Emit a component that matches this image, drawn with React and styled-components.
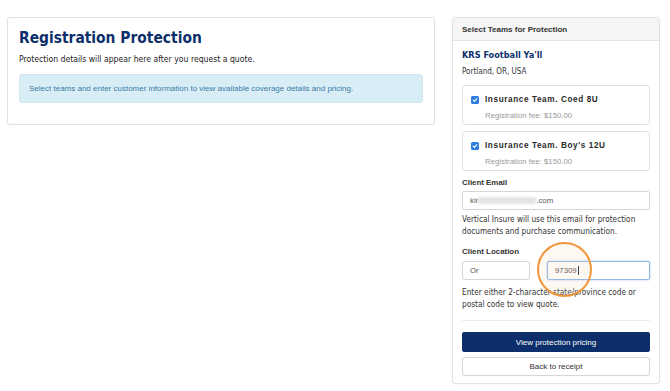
import React from 'react'
import styled, { createGlobalStyle } from 'styled-components'

const GlobalStyle = createGlobalStyle`
  body {
    margin: 0;
    background: #fff;
    font-family: "DejaVu Sans Condensed", "DejaVu Sans", Verdana, sans-serif;
    font-stretch: condensed;
    color: #222;
  }
`

const Page = styled.div`
  display: flex;
  align-items: flex-start;
  gap: 17px;
  padding: 17px 10px 0 7px;
  width: 670px;
  height: 391px;
  box-sizing: border-box;
  overflow: hidden;
`

const Card = styled.div`
  border: 1px solid #e2e2e2;
  border-radius: 3px;
  background: #fff;
  box-shadow: 0 0 2px rgba(0, 0, 0, 0.04);
`

const MainCard = styled(Card)`
  width: 428px;
  height: 108px;
  box-sizing: border-box;
  padding: 9px 11px;
`

const Title = styled.h1`
  margin: 0;
  font-size: 15.4px;
  line-height: 22px;
  font-weight: bold;
  color: #0c2f6b;
`

const Lead = styled.p`
  margin: 5px 0 0;
  font-size: 8.6px;
  color: #222;
`

const Alert = styled.div`
  margin-top: 10px;
  background: #d9edf7;
  border: 1px solid #cfe6f1;
  border-radius: 3px;
  padding: 9px 9px;
  font-family: "Liberation Sans", Arial, sans-serif;
  font-stretch: normal;
  font-size: 8px;
  color: #3a7ca5;
`

const SideCard = styled(Card)`
  width: 208px;
  height: 367px;
  box-sizing: border-box;
  overflow: hidden;
`

const SideHeader = styled.div`
  background: #f5f5f5;
  border-bottom: 1px solid #e4e4e4;
  height: 22px;
  display: flex;
  align-items: center;
  padding: 0 9px;
  font-family: "Liberation Sans", Arial, sans-serif;
  font-stretch: normal;
  font-weight: bold;
  font-size: 8px;
  color: #333;
`

const SideBody = styled.div`
  padding: 7px 9px 0;
  display: flex;
  flex-direction: column;
`

const OrgName = styled.div`
  font-size: 9.1px;
  font-weight: bold;
  color: #0c2f6b;
  line-height: 14px;
`

const OrgPlace = styled.div`
  margin-top: 5px;
  font-size: 8px;
  color: #333;
`

const TeamBox = styled.div`
  margin-top: ${p => p.$first ? 9 : 6}px;
  border: 1px solid #e0e0e0;
  border-radius: 3px;
  height: 40px;
  box-sizing: border-box;
  padding: 7px 8px 0;
  display: grid;
  grid-template-columns: 14px 1fr;
  font-family: "Liberation Sans", Arial, sans-serif;
  font-stretch: normal;
`

const Check = styled.span`
  width: 8px;
  height: 8px;
  margin-top: 3px;
  border-radius: 1.5px;
  background: #2f7de1;
  display: flex;
  align-items: center;
  justify-content: center;
`

const TeamName = styled.div`
  font-weight: bold;
  font-size: 8.2px;
  letter-spacing: 0.6px;
  color: #2a2a2a;
  line-height: 14px;
  white-space: nowrap;
`

const TeamFee = styled.div`
  grid-column: 2;
  font-size: 7.8px;
  color: #999;
  line-height: 12px;
  white-space: nowrap;
`

const FieldLabel = styled.div`
  margin-top: ${p => p.$mt}px;
  font-family: "Liberation Sans", Arial, sans-serif;
  font-stretch: normal;
  font-weight: bold;
  font-size: 7.9px;
  color: #333;
`

const Input = styled.div`
  margin-top: ${p => p.$mt ?? 5}px;
  height: 19px;
  box-sizing: border-box;
  border: 1px solid ${p => p.$focus ? '#8fb8ea' : '#d6d6d6'};
  box-shadow: ${p => p.$focus ? '0 0 2px rgba(80,140,230,0.5)' : 'none'};
  border-radius: 2px;
  display: flex;
  align-items: center;
  padding: 0 7px;
  font-family: "Liberation Sans", Arial, sans-serif;
  font-stretch: normal;
  font-size: 7.8px;
  color: #555;
  flex: ${p => p.$grow || 'none'};
  width: ${p => p.$w ? p.$w + 'px' : 'auto'};
`

const Blur = styled.span`
  display: inline-block;
  width: 58px;
  height: 7px;
  background: #e4e4e4;
  filter: blur(1px);
`

const Caret = styled.span`
  display: inline-block;
  width: 1px;
  height: 9px;
  background: #333;
  margin-left: 1px;
`

const Help = styled.p`
  margin: ${p => p.$mt}px 0 0;
  font-size: 8.2px;
  line-height: 12px;
  color: #333;
`

const InputRow = styled.div`
  display: flex;
  gap: 17px;
  position: relative;
`

const Highlight = styled.span`
  position: absolute;
  left: 75px;
  top: -14px;
  width: 51px;
  height: 51px;
  border-radius: 50%;
  border: 2.5px solid #f19539;
  background: rgba(250, 200, 150, 0.12);
  pointer-events: none;
`

const Divider = styled.hr`
  margin: 10px 0 0;
  border: 0;
  border-top: 1px solid #ececec;
`

const Button = styled.button`
  margin-top: ${p => p.$mt}px;
  height: ${p => p.$primary ? 20 : 19}px;
  border-radius: 2px;
  border: 1px solid ${p => p.$primary ? '#0c2f6b' : '#d6d6d6'};
  background: ${p => p.$primary ? '#0c2f6b' : '#fff'};
  color: ${p => p.$primary ? '#fff' : '#333'};
  font-family: "Liberation Sans", Arial, sans-serif;
  font-size: 8px;
  padding: 0;
`

const CheckIcon = () => (
  <svg width="6" height="6" viewBox="0 0 10 10">
    <path d="M2 5.2 L4.2 7.3 L8 2.8" fill="none" stroke="#fff" strokeWidth="1.8" strokeLinecap="round" strokeLinejoin="round" />
  </svg>
)

const teams = [
  { name: 'Insurance Team. Coed 8U', fee: '$150.00' },
  { name: "Insurance Team. Boy's 12U", fee: '$150.00' },
]

export default function App() {
  return (
    <>
      <GlobalStyle />
      <Page>
        <MainCard>
          <Title>Registration Protection</Title>
          <Lead>Protection details will appear here after you request a quote.</Lead>
          <Alert>Select teams and enter customer information to view available coverage details and pricing.</Alert>
        </MainCard>

        <SideCard>
          <SideHeader>Select Teams for Protection</SideHeader>
          <SideBody>
            <OrgName>KRS Football Ya'll</OrgName>
            <OrgPlace>Portland, OR, USA</OrgPlace>

            {teams.map((t, i) => (
              <TeamBox key={t.name} $first={i === 0}>
                <Check><CheckIcon /></Check>
                <TeamName>{t.name}</TeamName>
                <TeamFee>Registration fee: {t.fee}</TeamFee>
              </TeamBox>
            ))}

            <FieldLabel $mt={7}>Client Email</FieldLabel>
            <Input $mt={4}>kir<Blur />.com</Input>
            <Help $mt={3}>Vertical Insure will use this email for protection documents and purchase communication.</Help>

            <FieldLabel $mt={10}>Client Location</FieldLabel>
            <InputRow>
              <Input $w={68}>Or</Input>
              <Input $grow={1} $focus>97309<Caret /></Input>
              <Highlight />
            </InputRow>
            <Help $mt={6}>Enter either 2-character state/province code or postal code to view quote.</Help>

            <Divider />
            <Button $primary $mt={11}>View protection pricing</Button>
            <Button $mt={5}>Back to receipt</Button>
          </SideBody>
        </SideCard>
      </Page>
    </>
  )
}
